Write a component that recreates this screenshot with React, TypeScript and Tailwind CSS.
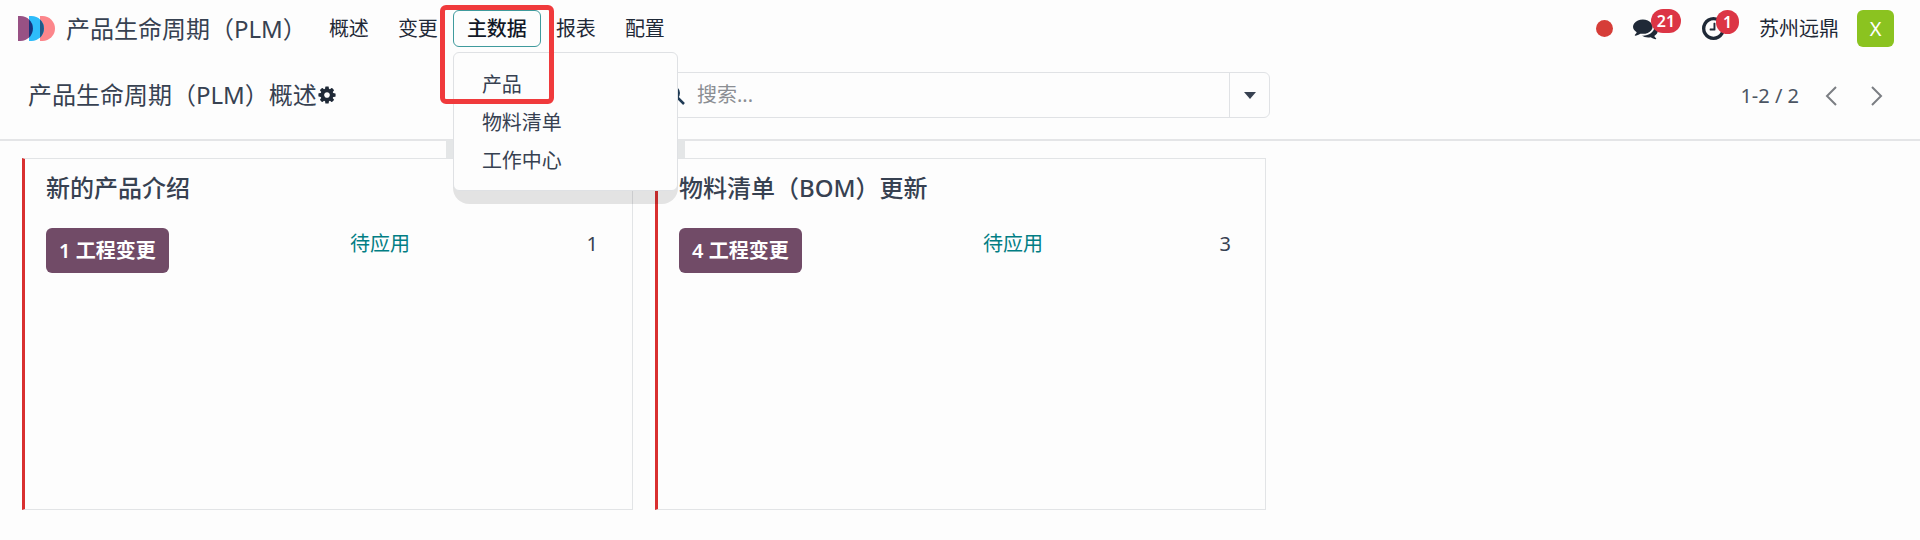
import React, { useState } from "react";

interface MenuEntry {
  label: string;
  children?: string[];
}

interface EcoType {
  id: number;
  name: string;
  changes: number;
  toApply: number;
}

const menuEntries: MenuEntry[] = [
  { label: "概述" },
  { label: "变更" },
  { label: "主数据", children: ["产品", "物料清单", "工作中心"] },
  { label: "报表" },
  { label: "配置" },
];

const ecoTypes: EcoType[] = [
  { id: 1, name: "新的产品介绍", changes: 1, toApply: 1 },
  { id: 2, name: "物料清单（BOM）更新", changes: 4, toApply: 3 },
];

const PlmLogo = () => (
  <svg viewBox="0 0 37 25" className="w-[37px] h-[25px]" aria-hidden="true">
    <path d="M0 0h2.5a12.5 12.5 0 0 1 0 25H0z" fill="#985184" />
    <path d="M22 0h2.5a12.5 12.5 0 0 1 0 25H22z" fill="#fc868b" />
    <path d="M11 0h2.5a12.5 12.5 0 0 1 0 25H11z" fill="#2ebcfa" />
    <path d="M11 3.4a12.5 12.5 0 0 1 0 18.2z" fill="#17337c" />
    <path d="M22 3.4a12.5 12.5 0 0 1 0 18.2z" fill="#1f5a88" />
  </svg>
);

const CogIcon = () => (
  <svg viewBox="0 0 1792 1792" className="size-5" fill="currentColor" aria-hidden="true">
    <path d="M1152 896q0-106-75-181t-181-75-181 75-75 181 75 181 181 75 181-75 75-181zm512-109v222q0 12-8 23t-20 13l-185 28q-19 54-39 91 35 50 107 138 10 12 10 25t-9 23q-27 37-99 108t-94 71q-12 0-26-9l-138-108q-44 23-91 38-16 136-29 186-7 28-36 28h-222q-14 0-24.5-8.5t-11.5-21.5l-28-184q-49-16-90-37l-141 107q-10 9-25 9-14 0-25-11-126-114-165-168-7-10-7-23 0-12 8-23 15-21 51-66.5t54-70.5q-27-50-41-99l-183-27q-13-2-21-12.5t-8-23.5v-222q0-12 8-23t19-13l186-28q14-46 39-92-40-57-107-138-10-12-10-24 0-10 9-23 26-36 98.5-107.5t94.5-71.5q13 0 26 10l138 107q44-23 91-38 16-136 29-186 7-28 36-28h222q14 0 24.5 8.5t11.5 21.5l28 184q49 16 90 37l142-107q9-9 24-9 13 0 25 10 129 119 165 170 7 8 7 22 0 12-8 23-15 21-51 66.5t-54 70.5q26 50 41 98l183 28q13 2 21 12.5t8 23.5z" />
  </svg>
);

const CommentsIcon = () => (
  <svg viewBox="0 0 1792 1792" className="size-[25px]" fill="currentColor" aria-hidden="true">
    <path d="M1408 768q0 139-94 257t-256.5 186.5-353.5 68.5q-86 0-176-16-124 88-278 128-36 9-86 16h-3q-11 0-20.5-8t-11.5-21q-1-3-1-6.5t.5-6.5 2-6l2.5-5 3.5-5.5 4-5 4.5-5 4-4.5q5-6 23-25t26-29.5 22.5-29 25-38.5 20.5-44q-124-72-195-177t-71-224q0-139 94-257t256.5-186.5 353.5-68.5 353.5 68.5 256.5 186.5 94 257zm384 256q0 120-71 224.5t-195 176.5q10 24 20.5 44t25 38.5 22.5 29 26 29.5 23 25q1 1 4 4.5t4.5 5 4 5 3.5 5.5l2.5 5 2 6 .5 6.5-1 6.5q-3 14-13 22t-22 7q-50-7-86-16-154-40-278-128-90 16-176 16-271 0-472-132 58 4 88 4 161 0 309-45t264-129q125-92 192-212t67-254q0-77-23-152 129 71 204 178t75 230z" />
  </svg>
);

const ClockIcon = () => (
  <svg viewBox="0 128 1536 1536" className="size-[23px]" fill="currentColor" aria-hidden="true">
    <path d="M896 544v448q0 14-9 23t-23 9h-320q-14 0-23-9t-9-23v-64q0-14 9-23t23-9h224v-352q0-14 9-23t23-9h64q14 0 23 9t9 23zm416 352q0-148-73-273t-198-198-273-73-273 73-198 198-73 273 73 273 198 198 273 73 273-73 198-198 73-273zm224 0q0 209-103 385.5t-279.5 279.5-385.5 103-385.5-103-279.5-279.5-103-385.5 103-385.5 279.5-279.5 385.5-103 385.5 103 279.5 279.5 103 385.5z" />
  </svg>
);

const SearchIcon = () => (
  <svg viewBox="0 0 20 20" className="size-5" fill="none" stroke="currentColor" strokeWidth="2" aria-hidden="true">
    <circle cx="8" cy="8" r="6" />
    <path d="M12 12l7 7" strokeWidth="2.5" />
  </svg>
);

const Chevron = ({ d }: { d: string }) => (
  <svg viewBox="0 0 12 20" className="w-3 h-5" fill="none" stroke="#7b7e83" strokeWidth="2" aria-hidden="true">
    <path d={d} />
  </svg>
);

const DropdownMenu = ({ items }: { items: string[] }) => (
  <div className="absolute left-0 top-[42px] z-10 w-[225px]">
    {/* shadow spill at the sides and below the panel */}
    <span className="absolute -left-[7px] -right-[7px] top-[88px] h-[18px] bg-[#e4e6e7]" />
    <span className="absolute -bottom-[13px] left-0 right-0 h-8 rounded-b-2xl bg-black/10" />
    <ul className="relative rounded-md border border-[#dfe1e4] bg-[#fdfdfd] pt-[13px] pb-[10px]">
      {items.map((item) => (
        <li key={item}>
          <a href="#" className="block px-7 leading-[38px] text-[#374151]">
            {item}
          </a>
        </li>
      ))}
    </ul>
  </div>
);

const Navbar = () => {
  const [openMenu, setOpenMenu] = useState<string | null>("主数据");

  return (
    <nav className="flex h-14 items-center justify-between pl-[18px] pr-[26px] pt-px text-[#1f2937]">
      <div className="flex items-center">
        <a href="#" className="flex items-center gap-[11px] text-2xl text-[#374151]">
          <PlmLogo />
          产品生命周期（PLM）
        </a>

        <div className="ml-2 flex gap-px">
          {menuEntries.map((entry) => {
            const isOpen = openMenu === entry.label && !!entry.children;
            return (
              <div key={entry.label} className="relative">
                <button
                  type="button"
                  onClick={() => setOpenMenu(isOpen ? null : entry.label)}
                  className={
                    isOpen
                      ? "h-[37px] rounded-md border border-[#3f9a9d] px-[13px] font-medium text-[#111827]"
                      : "h-[37px] px-[14px]"
                  }
                >
                  {entry.label}
                </button>
                {isOpen && (
                  <>
                    <DropdownMenu items={entry.children!} />
                    <span className="pointer-events-none absolute -left-[13px] -top-[5px] z-20 h-[99px] w-[114px] rounded-md border-5 border-[#f03a3c]" />
                  </>
                )}
              </div>
            );
          })}
        </div>
      </div>

      <div className="flex items-center">
        <span className="size-[17px] rounded-full bg-[#d63d38]" />
        <button type="button" aria-label="消息" className="relative ml-5">
          <CommentsIcon />
          <span className="absolute left-[18px] -top-[7px] flex h-6 w-[30px] items-center justify-center rounded-full bg-[#dc3545] text-base font-semibold text-white">
            21
          </span>
        </button>
        <button type="button" aria-label="活动" className="relative ml-11">
          <ClockIcon />
          <span className="absolute left-[14px] -top-[7px] flex h-6 w-[23px] items-center justify-center rounded-full bg-[#dc3545] text-base font-semibold text-white">
            1
          </span>
        </button>
        <span className="ml-[34px]">苏州远鼎</span>
        <button type="button" className="ml-[18px] size-[37px] rounded-md bg-[#8bc320] text-white">
          X
        </button>
      </div>
    </nav>
  );
};

const ControlPanel = () => (
  <header className="grid h-[85px] grid-cols-3 border-b-2 border-[#e4e5e7] pt-4">
    <div className="flex h-[46px] items-center pl-7">
      <h1 className="text-2xl text-[#374151]">产品生命周期（PLM）概述</h1>
      <button type="button" aria-label="设置" className="text-[#1f2937]">
        <CogIcon />
      </button>
    </div>

    <div className="px-[10px]">
      <div className="flex h-[46px] rounded-md border border-[#e0e2e5]">
        <label htmlFor="search" className="flex items-center pl-[14px] text-[#1f3a54]">
          <SearchIcon />
        </label>
        <input
          id="search"
          type="text"
          placeholder="搜索..."
          className="min-w-0 flex-1 bg-transparent pl-3 outline-none placeholder:text-[#8b8e93]"
        />
        <button
          type="button"
          aria-label="筛选"
          className="flex w-10 items-center justify-center border-l border-[#e0e2e5] text-[#374151]"
        >
          <svg viewBox="0 0 12 7" className="w-3 h-[7px]" fill="currentColor">
            <path d="M0 0h12L6 7z" />
          </svg>
        </button>
      </div>
    </div>

    <div className="flex h-[46px] items-center justify-end pr-[37px] pt-px text-[#4b5563]">
      <span>1-2 / 2</span>
      <button type="button" aria-label="上一页" className="ml-[26px]">
        <Chevron d="M11 1L2 10l9 9" />
      </button>
      <button type="button" aria-label="下一页" className="ml-[34px]">
        <Chevron d="M1 1l9 9-9 9" />
      </button>
    </div>
  </header>
);

const EcoCard = ({ eco }: { eco: EcoType }) => (
  <article className="min-h-[352px] w-[611px] border border-l-3 border-[#e2e4e6] border-l-[#d93030] py-[11px] pl-[21px] pr-[34px]">
    <h2 className="text-2xl font-medium leading-9 text-[#374151]">{eco.name}</h2>
    <div className="mt-[22px] flex items-start">
      <div className="w-[304px]">
        <button
          type="button"
          className="h-[45px] rounded-md bg-[#714b67] px-[13px] font-semibold text-white"
        >
          {eco.changes} 工程变更
        </button>
      </div>
      <div className="flex flex-1 justify-between leading-8">
        <a href="#" className="text-[#017e84]">
          待应用
        </a>
        <span className="text-[#374151]">{eco.toApply}</span>
      </div>
    </div>
  </article>
);

const App: React.FC = () => {
  return (
    <div className="min-h-screen bg-[#fdfdfd] font-['Noto_Sans','Noto_Sans_CJK_SC',sans-serif] text-xl">
      <Navbar />
      <ControlPanel />
      <main className="flex flex-wrap gap-[22px] px-[22px] pt-[17px]">
        {ecoTypes.map((eco) => (
          <EcoCard key={eco.id} eco={eco} />
        ))}
      </main>
    </div>
  );
};

export default App;
